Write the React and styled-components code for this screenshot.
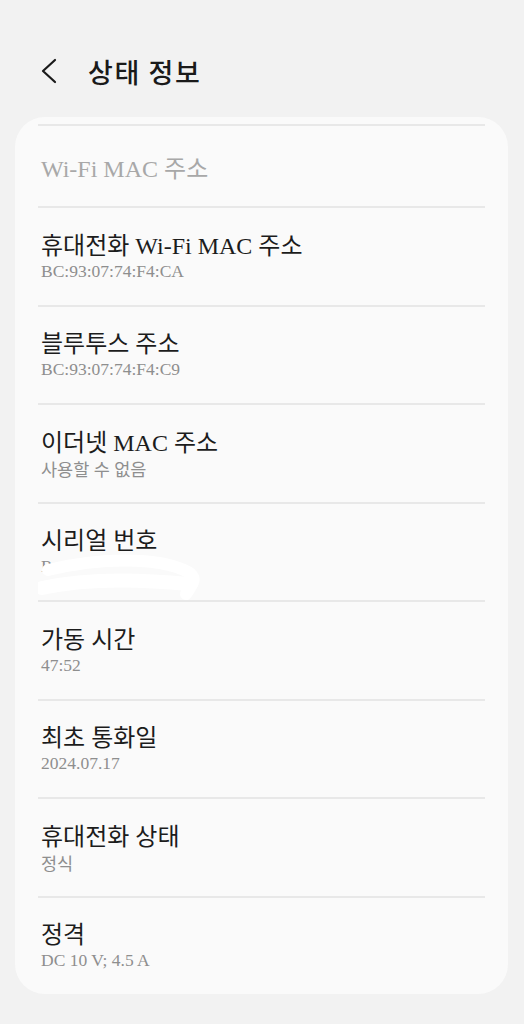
import React from "react";
import styled, { createGlobalStyle } from "styled-components";

const GlobalStyle = createGlobalStyle`
  html, body {
    margin: 0;
    padding: 0;
    background: #f2f2f2;
  }
  body {
    font-family: "Liberation Serif", "Noto Sans CJK KR", serif;
  }
`;

const rows = [
  { title: "휴대전화 Wi-Fi MAC 주소", value: "BC:93:07:74:F4:CA" },
  { title: "블루투스 주소", value: "BC:93:07:74:F4:C9" },
  { title: "이더넷 MAC 주소", value: "사용할 수 없음" },
  { title: "시리얼 번호", value: "R", hidden: true },
  { title: "가동 시간", value: "47:52" },
  { title: "최초 통화일", value: "2024.07.17" },
  { title: "휴대전화 상태", value: "정식" },
  { title: "정격", value: "DC 10 V; 4.5 A" },
];

const App = () => {
  return (
    <Page>
      <GlobalStyle />
      <Header>
        <BackButton>
          <svg width="18" height="26" viewBox="0 0 18 26">
            <path d="M15 2 L3 13 L15 24" fill="none" stroke="#1a1a1a" strokeWidth="2.2" strokeLinecap="round" strokeLinejoin="round" />
          </svg>
        </BackButton>
        <Title>상태 정보</Title>
      </Header>
      <Card>
        <Divider />
        <FadedRow>Wi-Fi MAC 주소</FadedRow>
        {rows.map((r) => (
          <React.Fragment key={r.title}>
            <Divider />
            <Row>
              <RowTitle>{r.title}</RowTitle>
              <RowValue>{r.value}</RowValue>
              {r.hidden && (
                <Scribble width="170" height="50" viewBox="0 0 170 50">
                  <path d="M4 38 C40 30 90 28 150 34" fill="none" stroke="#ffffff" strokeWidth="14" strokeLinecap="round" />
                  <path d="M10 20 C60 8 120 6 150 22 C160 28 155 34 148 44" fill="none" stroke="#ffffff" strokeWidth="12" strokeLinecap="round" />
                </Scribble>
              )}
            </Row>
          </React.Fragment>
        ))}
      </Card>
    </Page>
  );
};

export default App;

const Page = styled.div`
  width: 524px;
  min-height: 1024px;
  background: #f2f2f2;
  padding-top: 50px;
  box-sizing: border-box;
`;

const Header = styled.div`
  display: flex;
  align-items: center;
  height: 42px;
  padding-left: 40px;
  margin-bottom: 25px;
`;

const BackButton = styled.div`
  display: flex;
  align-items: center;
  width: 48px;
`;

const Title = styled.div`
  font-family: "Noto Sans CJK KR", sans-serif;
  font-size: 27px;
  font-weight: 500;
  color: #1a1a1a;
  letter-spacing: 1.6px;
`;

const Card = styled.div`
  margin: 0 16px 0 15px;
  background: #fafafa;
  border-radius: 30px;
  padding: 7px 23px 0;
`;

const Divider = styled.div`
  height: 2px;
  background: #e8e8e8;
`;

const FadedRow = styled.div`
  height: 80px;
  display: flex;
  align-items: center;
  padding-left: 3px;
  font-size: 24px;
  color: #a8a8a8;
`;

const Row = styled.div`
  position: relative;
  padding: 21px 3px 19.5px;
`;

const RowTitle = styled.div`
  height: 28px;
  display: flex;
  align-items: center;
  font-size: 24px;
  color: #1c1c1c;
  white-space: nowrap;
`;

const RowValue = styled.div`
  height: 28px;
  display: flex;
  align-items: center;
  font-size: 17.5px;
  color: #8e8e8e;
  white-space: nowrap;
`;

const Scribble = styled.svg`
  position: absolute;
  left: 0;
  top: 46px;
`;
